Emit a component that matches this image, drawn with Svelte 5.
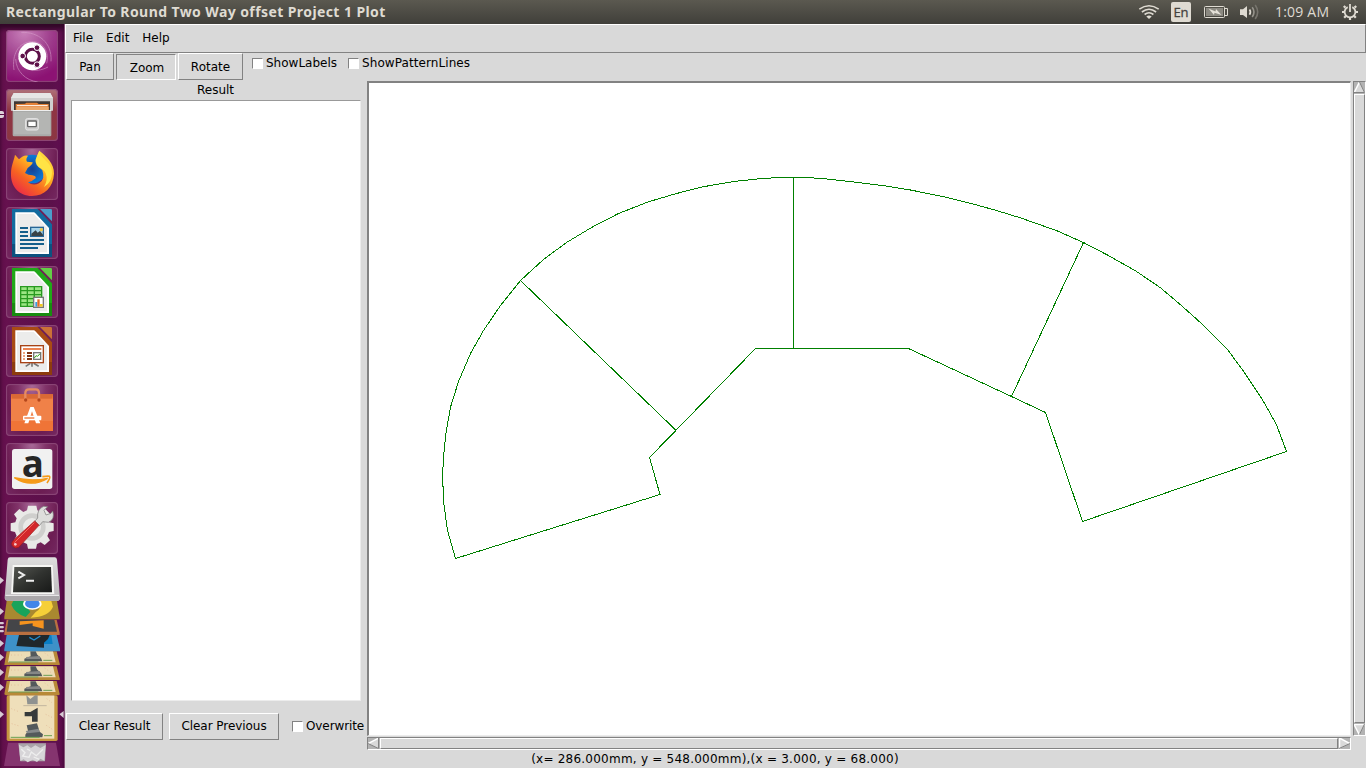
<script>
  const outline = '455.5,558.5 447.5,530.5 443.8,503.5 442.5,475.5 443.8,453.5 446.3,430.5 450.7,406.5 458.5,381.5 470.5,353.5 483.5,330.5 500.5,305.5 520.5,280.5 543.5,259.5 566.5,242.5 591.5,227.5 618.5,213.5 648.5,201.8 676.5,193.5 703.5,186.7 733.5,181.5 758.5,178.9 778.5,177.5 809.5,177.7 828.5,179.1 856.5,182.3 885.5,186 910.5,190 943.5,196.7 970.5,203.3 996.5,210.5 1020.5,217.9 1056.5,230.6 1083.5,242.5 1106.5,254.5 1135.5,270.8 1160.5,287.8 1181.5,305.6 1202.6,324.5 1227,348.8 1243.5,371.3 1261.9,398.7 1276.3,424.3 1286.5,451.5 1082.5,521.5 1045.5,412.5 1011.5,396.5 908.5,348.5 755.5,348.5 676,430.3 649.5,457.5 660,494.5';
  const spokes = [[793.5,177.5,793.5,348.5],[520.5,280.5,676,430.3],[1083.5,242.5,1011.5,396.5]];
</script>

{#snippet doc(y, color, dark, light)}
  <path d="M36 {y} H128 L156 {y+42} V{y+144} H36Z" fill={color}/>
  <path d="M36 {y+105} H156 V{y+144} H36Z" fill={dark} opacity=".55"/>
  <path d="M46 {y+10} H104 L147 {y+56} V{y+135} H46Z" fill="#fff"/>
  <path d="M51 {y+15} H101 L141 {y+57} V{y+130} H51Z" fill="#ececeb"/>
  <path d="M104 {y+10} L147 {y+56} L145 {y+42} L114 {y+9}Z" fill="#d4d4d4"/>
  <path d="M112 {y-1} H157 V{y+47}Z" fill="#702157"/>
  <path d="M104 {y} H112 L156 {y+47} V{y+56} L147 {y+56} L104 {y+10}Z" fill={color}/>
  <path d="M120 {y} H152 Q156 {y} 156 {y+4} V{y+37}Z" fill={light}/>
{/snippet}

<div class="desktop">
  <header class="panel">
    <span class="title">Rectangular To Round Two Way offset Project 1 Plot</span>
    <div class="tray">
      <svg width="24" height="24" viewBox="0 0 24 24" fill="none" stroke="#dfdbd2" stroke-width="1.6"><path d="M2.3 9.2Q12 2.2 21.7 9.2M4.9 12Q12 6.5 19.1 12M7.6 14.5Q12 11 16.4 14.5"/><path d="M9.3 16.5L12 19L14.7 16.5Q12 14.5 9.3 16.5Z" fill="#dfdbd2" stroke="none"/></svg>
      <span class="lang">En</span>
      <svg class="battery" width="26" height="24" viewBox="0 0 26 24"><rect x="1.5" y="6.5" width="20" height="11" rx="1" fill="none" stroke="#dfdbd2"/><rect x="3" y="8" width="17" height="8" fill="#8b8981"/><path d="M22 8.5H24.5V15.5H22" fill="none" stroke="#dfdbd2"/><path d="M5.5 8.5L12.5 11.5L13 9L18.5 15L11.5 12.7L11 15Z" fill="#e5e1d8"/></svg>
      <svg class="volume" width="22" height="24" viewBox="0 0 22 24" fill="none"><path d="M1 9.2H4L8 6V18L4 15H1Z" fill="#dfdbd2"/><path d="M10.5 9.4Q12.3 12 10.5 14.8" stroke="#dfdbd2" stroke-width="1.7"/><path d="M13.2 7.2Q16.8 12 13.2 17" stroke="#96938b" stroke-width="1.6"/><path d="M16.2 5Q21.2 12 16.2 19" stroke="#77746d" stroke-width="1.6"/></svg>
      <span class="clock">1:09 AM</span>
      <svg class="power" width="18" height="24" viewBox="0 0 18 24" fill="none" stroke="#dfdbd2"><path d="M6.7 7.1A5.4 5.4 0 1 0 11.3 7.1" stroke-width="1.8"/><path d="M9 4V12" stroke-width="1.8"/><path d="M4.4 7.6L2.8 6M13.6 7.6L15.2 6M3.6 12H1M14.4 12H17M4.8 16L3.2 17.7M13.2 16L14.8 17.7M9 17.5V20" stroke-width="2.2"/></svg>
    </div>
  </header>

  <div class="body">
    <nav class="launcher">
      <svg class="tile dash" viewBox="18 18 156 156">
        <g fill="none" stroke="#d9a0cd" stroke-width="3" opacity=".55"><path d="M42 138C35 92 55 55 94 53C129 51 149 84 140 118"/><path d="M64 25C115 24 157 55 153 112"/><path d="M47 105C49 143 77 169 113 174"/><path d="M55 102C65 136 105 150 144 129"/></g>
        <circle cx="97" cy="97" r="42" fill="#fff"/>
        <circle cx="97" cy="97" r="21" fill="none" stroke="#5e1149" stroke-width="9"/>
        <g stroke="#fff" stroke-width="3" fill="#5e1149"><circle cx="68" cy="96" r="8.5"/><circle cx="111" cy="71" r="8.5"/><circle cx="111" cy="122" r="8.5"/></g>
      </svg>
      <div class="slot"><i class="pips"></i>
        <svg class="tile files" viewBox="18 195 156 156">
          <path d="M41 207H151L159 222V260H33V222Z" fill="#cfcfce"/><path d="M41 207H151L159 222H33Z" fill="#e6e6e5"/><path d="M42 232H150V260H42Z" fill="#3f3733"/>
          <path d="M47 240L75 239L79 236H111L116 240H146V260H47Z" fill="#e48238"/><path d="M51 245H143" stroke="#fff" stroke-width="3"/><path d="M49 249H146V260H49Z" fill="#eba86a"/>
          <path d="M38 258H154V334Q154 337 150 337H42Q38 337 38 333Z" fill="#a9aaa8"/><path d="M38 258H154V261H38Z" fill="#eee"/><path d="M42 264H150V331H42Z" fill="#b4b5b3"/>
          <rect x="77" y="284" width="38" height="34" rx="5" fill="#ccc" stroke="#e8e8e8" stroke-width="3"/><rect x="83" y="291" width="26" height="17" rx="2" fill="#fff" stroke="#666" stroke-width="4"/>
        </svg>
      </div>
      <svg class="tile" viewBox="18 372 156 156">
        <defs><linearGradient id="fox" x1=".9" y1="0" x2=".15" y2="1"><stop stop-color="#ffe94a"/><stop offset=".4" stop-color="#ffaf22"/><stop offset=".67" stop-color="#f76322"/><stop offset="1" stop-color="#e9224d"/></linearGradient><radialGradient id="globe"><stop stop-color="#183f91"/><stop offset="1" stop-color="#087ddb"/></radialGradient></defs>
        <circle cx="96" cy="435" r="43" fill="url(#globe)"/>
        <path d="M118 380C137 395 163 418 162 449C160 490 133 515 96 516C56 516 32 486 33 450C33 424 42 410 45 392L57 406Q71 391 84 395Q76 405 81 413L98 415Q98 422 83 432L75 447Q85 454 97 454Q109 456 107 463L94 472L84 475Q99 487 117 478Q137 466 127 439Q113 426 110 417Q107 402 118 380Z" fill="url(#fox)"/>
        <path d="M118 380C121 405 157 414 156 446Q156 475 132 489Q145 468 137 448Q132 437 116 430Q101 415 110 398Z" fill="#ffe345"/>
      </svg>
      <svg class="tile" viewBox="18 21 156 156">{@render doc(27,'#126b9f','#073c65','#4c9ecb')}
        <g stroke="#155f8b" stroke-width="6"><path d="M60 84H84M60 96H84M60 108H84M60 120H132M60 132H132M60 144H114"/></g><rect x="92" y="82" width="38" height="27" fill="#a9d4e9" stroke="#286695" stroke-width="4"/><path d="M94 108V101L107 91L113 98L120 93L129 104V108Z" fill="#394347"/><circle cx="124" cy="89" r="5" fill="#edc948"/>
      </svg>
      <svg class="tile" viewBox="18 198 156 156">{@render doc(204,'#20a818','#12740b','#63ce47')}
        <rect x="62" y="260" width="63" height="59" fill="#9be583"/><path d="M62 272H125M62 284H125M62 296H125M62 308H125M62 260H125V319H62ZM82 260V319M103 260V319" fill="none" stroke="#289a20" stroke-width="4"/><rect x="101" y="292" width="29" height="30" fill="#fff" stroke="#777" stroke-width="4"/><path d="M106 306H112V320H106Z" fill="#3a9bdd"/><path d="M112 298H119V320H112Z" fill="#e66a22"/><path d="M120 312H128V320H120Z" fill="#f1c921"/>
      </svg>
      <svg class="tile" viewBox="18 375 156 156">{@render doc(381,'#a94b14','#76310a','#cb7137')}
        <path d="M96 488V500M91 490L77 499M101 490L116 499" stroke="#777" stroke-width="5"/><rect x="62" y="437" width="68" height="51" fill="#fff" stroke="#a74316" stroke-width="4"/><path d="M69 447H124" stroke="#e6692e" stroke-width="5"/><path d="M69 459H75M69 468H75M69 477H75" stroke="#e78755" stroke-width="5"/><path d="M81 459H96M81 468H96M81 477H96" stroke="#803413" stroke-width="6"/><rect x="101" y="458" width="21" height="20" fill="#fff" stroke="#777" stroke-width="4"/><path d="M103 474L108 467L113 469L120 461" fill="none" stroke="#39a31d" stroke-width="3"/>
      </svg>
      <svg class="tile" viewBox="18 24 156 156">
        <path d="M33 55H159V165H33Z" fill="#ef7437"/><path d="M33 55H159L155 68H37Z" fill="#d96935"/><path d="M33 68H159V135H33Z" fill="#f08148"/><path d="M76 71V52Q76 40 87 40H107Q117 40 117 52V71" fill="none" stroke="#e68b61" stroke-width="7"/><circle cx="77" cy="72" r="5" fill="#b4471c"/><circle cx="117" cy="72" r="5" fill="#b4471c"/>
        <path d="M73 142L91 93H101L121 142H108L96 106L85 142Z" fill="#fff"/><rect x="69" y="119" width="55" height="14" rx="3" fill="#fff"/><path d="M73 126H103" stroke="#ef7437" stroke-width="4"/>
      </svg>
      <svg class="tile" viewBox="18 201 156 156"><rect x="36" y="219" width="121" height="120" rx="8" fill="#f1f1f1"/><text x="65" y="303" font-family="Open Sans, sans-serif" font-size="110" font-weight="700" fill="#262626">a</text><path d="M43 305Q91 337 143 307Q94 317 43 305Z" fill="#f59a18" stroke="#f59a18" stroke-width="4"/><path d="M127 302Q149 299 149 302Q151 307 141 321" fill="none" stroke="#f59a18" stroke-width="5"/></svg>
      <svg class="tile" viewBox="18 378 156 156">
        <path d="M84 389H109L112 403L123 408L136 399L151 415L143 428L147 439L161 442V465L147 468L142 480L150 493L134 507L122 499L111 504L108 518H84L81 504L70 499L58 507L42 492L50 480L45 468L32 465V442L46 439L50 427L42 415L58 399L70 408L81 403Z" fill="#e9e9e7"/><circle cx="96" cy="453" r="34" fill="none" stroke="#cfcfcd" stroke-width="14"/><circle cx="96" cy="453" r="25" fill="#eaeae8"/>
        <path d="M105 435L113 426Q110 400 131 391L143 392L132 403L138 417L153 412L158 405Q166 430 145 439L128 437L118 449Z" fill="#dededc" stroke="#777" stroke-width="2"/><path d="M104 435L117 448L56 514Q45 520 37 510Q32 502 39 494Z" fill="#d3272b" stroke="#9c1717" stroke-width="2"/><path d="M103 440L43 500" stroke="#ef6a62" stroke-width="3"/><circle cx="46" cy="505" r="4" fill="#f6caca"/>
      </svg>
      <svg class="stack" width="65" height="211" viewBox="0 15 195 633">
        <defs><linearGradient id="steel" x2="0" y2="1"><stop stop-color="#dedede"/><stop offset="1" stop-color="#bab6b9"/></linearGradient><linearGradient id="screen" x2="1" y2="1"><stop stop-color="#545651"/><stop offset=".5" stop-color="#30322f"/><stop offset="1" stop-color="#181918"/></linearGradient></defs>
        <path d="M24 572H168L180 642H12Z" fill="#85346f"/><path d="M55 574H138L135 628H61Z" fill="#aaa4aa"/><path d="M57 578L70 586L82 580L93 588L106 580L121 588L137 579L133 626L121 620L111 630L98 623L83 631L71 622L61 627Z" fill="#d7d5d8"/><path d="M64 592L75 602L68 612L87 616L94 600L109 611L129 592M81 591L91 596M101 615L118 622" fill="none" stroke="#eee" stroke-width="4"/>
        <rect x="20" y="430" width="153" height="137" rx="5" fill="#c69740"/><rect x="29" y="430" width="134" height="130" fill="#efdfba"/>
        <path d="M79 430L91 441L105 430H113V457H82Z" fill="#8f9290"/><path d="M70 461H140" stroke="#c2b69f" stroke-width="3"/><path d="M74 480H91L113 467V509H96V493H74Z" fill="#363a3a"/><path d="M80 520L111 514L119 539L129 547L127 556H76V548L84 536Z" fill="#53595b"/><path d="M77 537L116 530L119 540L82 544Z" fill="#85898b"/><path d="M32 556H119M132 551H156" stroke="#69a052" stroke-width="3"/>
        <path d="M140 440L156 452M137 487L156 496M139 520L157 532M34 470L54 478M35 515L61 523" stroke="#dfb18e" stroke-width="2" stroke-dasharray="3 6"/>
        <g fill="#b88937"><path d="M20 387H170L179 426Q179 430 174 430H18L13 427Z"/><path d="M20 343H170L179 380V384H13Z"/><path d="M20 298H170L179 335V339H13Z"/></g>
        <g fill="#ecdcb5"><path d="M30 387H159L167 420H24Z"/><path d="M30 343H159L167 376H24Z"/><path d="M30 298H159L167 331H24Z"/></g>
        {#each [298,343,388] as y}<path d="M91 {y}H107L112 {y+10}L123 {y+20}L127 {y+30}H73V{y+22}L92 {y+15}Z" fill="#53595b"/><path d="M78 {y+17}L119 {y+14}L121 {y+23}H79Z" fill="#858786"/><path d="M26 {y+32}H115M130 {y+27}H157" stroke="#6a9e55" stroke-width="3"/><path d="M134 {y+5}L158 {y+22}M33 {y+11}H65" stroke="#dfb18e" stroke-width="2" stroke-dasharray="3 7"/>{/each}
        <path d="M20 249H170L180 291V298H13V292Z" fill="#3e91c8"/><path d="M122 249H154L158 276H99L106 265H125Z" fill="#087ec4"/><path d="M57 249H149L144 261L132 272V287L49 282Z" fill="#20282c"/><path d="M88 256L102 264L121 252" fill="none" stroke="#238dce" stroke-width="4"/>
        <path d="M20 203H170L179 242V249H13V243Z" fill="#ba7040"/><path d="M25 203H163L171 239H20Z" fill="#444548"/><path d="M59 208L131 205V230L98 222V214L59 219Z" fill="#f5931e"/>
        <path d="M20 147H171L179 196V202H13V195Z" fill="#a98930"/><path d="M40 147H70L91 180L77 195Q44 183 34 158Z" fill="#18a45b"/><path d="M120 147H154L159 164Q147 194 92 197L107 180Q128 169 120 147Z" fill="#f6cf38"/><ellipse cx="97" cy="156" rx="28" ry="17" fill="#fff"/><ellipse cx="97" cy="155" rx="22" ry="14" fill="#4385e9"/>
        <path d="M30 16H164Q170 16 171 23L180 137Q180 147 170 147H25Q13 147 14 136L23 23Q24 16 30 16Z" fill="url(#steel)"/><path d="M15 132H179V138Q179 146 170 146H24Q15 146 15 138Z" fill="#aaa7aa"/><path d="M17 130H177" stroke="#f0eef0" stroke-width="3"/><path d="M38 39H158L163 126H33Z" fill="#f6f6f4"/><path d="M43 45H153L156 121H39Z" fill="url(#screen)"/><path d="M55 59L72 69L55 79M78 86H102" fill="none" stroke="#eee" stroke-width="6"/>
        <g fill="#d6cad3"><path d="M0 75L12 85L0 96ZM0 168L12 178L0 189ZM0 264L12 274L0 285ZM0 306L12 316L0 327ZM0 351L12 361L0 372ZM0 396L12 406L0 417ZM0 477L12 487L0 498ZM191 477L178 487L191 498Z"/><path d="M0 210H9L13 213L9 217H0ZM0 222H9L13 225L9 229H0ZM0 234H9L13 237L9 241H0Z"/></g>
      </svg>
    </nav>

    <main class="app">
      <div class="menubar"><span>File</span><span>Edit</span><span>Help</span></div>
      <div class="work">
        <section class="side">
          <div class="tools"><button class="pan">Pan</button><button class="zoom">Zoom</button><button class="rotate">Rotate</button></div>
          <div class="caption">Result</div>
          <div class="result"></div>
          <div class="actions"><button class="clear">Clear Result</button><button class="previous">Clear Previous</button><label class="check"><i></i><span class="over">Overwrite</span></label></div>
        </section>
        <section class="plot">
          <div class="options"><label class="check"><i></i><span>ShowLabels</span></label><label class="check"><i></i><span class="pattern">ShowPatternLines</span></label></div>
          <div class="view">
            <div class="canvas">
              <svg width="981" height="652" viewBox="369 83 981 652" fill="none" stroke="#008000" stroke-width="1" shape-rendering="crispEdges">
                <polygon points={outline}/>
                {#each spokes as [x1,y1,x2,y2]}<line {x1} {y1} {x2} {y2}/>{/each}
              </svg>
            </div>
            <div class="scroll vertical">
              <svg width="11" height="11" viewBox="0 0 11 11"><path d="M5.5 0L11 11H0Z" fill="#d9d9d9"/><path d="M5.5 0L0 11" stroke="#fff" stroke-width="1.5"/><path d="M5.5 0L10.5 10.5H0" fill="none" stroke="#828282"/></svg>
              <div class="thumb"></div>
              <svg width="11" height="11" viewBox="0 0 11 11"><path d="M0 0H11L5.5 11Z" fill="#d9d9d9"/><path d="M11 .5H0L5.5 11" fill="none" stroke="#fff" stroke-width="1.5"/><path d="M5.5 10.5L10.5 0" stroke="#828282"/></svg>
            </div>
            <div class="scroll horizontal">
              <svg width="11" height="11" viewBox="0 0 11 11"><path d="M0 5.5L11 0V11Z" fill="#d9d9d9"/><path d="M0 5.5L11 0" stroke="#fff" stroke-width="1.5"/><path d="M0 5.5L10.5 10.5V0" fill="none" stroke="#828282"/></svg>
              <div class="thumb"></div>
              <svg width="11" height="11" viewBox="0 0 11 11"><path d="M0 0L11 5.5L0 11Z" fill="#d9d9d9"/><path d="M.5 11V0L11 5.5" fill="none" stroke="#fff" stroke-width="1.5"/><path d="M11 5.5L0 10.5" stroke="#828282"/></svg>
            </div>
          </div>
          <div class="status">(x= 286.000mm, y = 548.000mm),(x = 3.000, y = 68.000)</div>
        </section>
      </div>
    </main>
  </div>
</div>

<style>
  :global(body){margin:0;overflow:hidden;background:#d9d9d9}
  *{box-sizing:border-box}
  .desktop{width:1366px;height:768px;display:flex;flex-direction:column;font:12px/14px "DejaVu Sans",sans-serif;color:#000}
  .panel{height:24px;flex:none;display:flex;justify-content:space-between;background:linear-gradient(#5b5950,#403f3a);color:#dfdbd2;font-family:"Noto Sans","Open Sans",sans-serif}
  .title{padding-left:6px;font-size:14px;line-height:24px;font-weight:700;white-space:nowrap;letter-spacing:.41px}
  .tray{display:flex;align-items:center;padding-right:7px}
  .tray svg{flex:none}
  .lang{width:20px;height:20px;margin-left:10px;border-radius:2px;background:#dfdbd2;color:#45433e;font:13px/21px "Open Sans",sans-serif;-webkit-text-stroke:.3px #45433e;text-align:center}
  .battery{margin-left:12px}.volume{margin-left:10px}
  .clock{margin-left:14px;width:54px;font:14px/24px "Open Sans",sans-serif;white-space:nowrap;letter-spacing:.2px}
  .power{margin-left:12px}
  .body{display:flex;height:744px}
  .launcher{width:65px;height:744px;flex:none;display:flex;flex-direction:column;align-items:center;gap:7px;padding:6px 1px 0 0;background:linear-gradient(90deg,#67114f,#5b104a 80%,#620e52);border-right:1px solid #855377;box-shadow:inset 0 5px 5px #310727;overflow:hidden}
  .tile{display:block;width:52px;height:52px;flex:none;overflow:visible;border-radius:4px;background:radial-gradient(ellipse at 50% 0,#a96b99 0,#813369 38%,#6c1d53 70%,#752962);box-shadow:inset 0 0 1px 1px #8c4878}
  .dash{background:radial-gradient(circle at 35% 5%,#c880b9,#9f3f8d 45%,#8c1374 80%);overflow:hidden}
  .files{background:linear-gradient(#b0737a,#8f3544 40%,#8b3742)}
  .slot{display:flex;width:64px;height:52px;align-items:center;flex:none}
  .pips{width:4px;height:7px;margin-right:2px;margin-bottom:2px;border-top:3px solid #ddd2da;border-bottom:3px solid #ddd2da;border-radius:0 2px 2px 0}
  .stack{display:block;flex:none;margin-top:-4px;margin-left:1px}
  .app{width:1301px;display:flex;flex-direction:column;background:#d9d9d9}
  .menubar{height:29px;display:flex;gap:13px;padding:6px 7px;border:1px solid #828282;border-top-color:#fff;border-left-color:#fff}
  .work{display:flex;height:715px}
  .side{width:302px;display:flex;flex-direction:column;flex:none}
  .tools{display:flex;gap:2px;height:28px;padding-left:1px}
  button{height:27px;padding:0;border:1px solid #828282;border-top-color:#fff;border-left-color:#fff;background:#d9d9d9;font:inherit;color:#000;white-space:nowrap}
  .pan{width:48px}.zoom{width:60px;height:26px;margin-top:1px;border-color:#828282 #fff #fff #828282;background:#d9d9d9;padding:1px 0 0 2px}.rotate{width:65px}
  .caption{height:19px;text-align:center;line-height:19px;padding-right:1px}
  .result{width:290px;height:601px;margin-left:6px;background:#fff;border:1px solid #999;border-right-color:#ececec;border-bottom-color:#ececec}
  .actions{height:39px;margin-top:12px;display:flex;padding-left:1px}
  .actions button{padding-bottom:2px}
  .clear{width:97px;letter-spacing:-.05px}.previous{width:110px;margin-left:6px;letter-spacing:-.05px}
  .check{display:flex;align-items:flex-start;gap:3px}
  .over{letter-spacing:-.1px}.pattern{letter-spacing:.08px}
  .check i{width:11px;height:11px;margin-top:2px;flex:none;background:#fff;border:1px solid #828282;border-right-color:#fff;border-bottom-color:#fff}
  .actions .check{margin-left:13px;padding-top:6px}
  .plot{width:999px;display:flex;flex-direction:column}
  .options{height:28px;display:flex;gap:11px;padding-top:3px;margin-left:-115px}
  .view{display:grid;grid-template-columns:984px 2px 13px;grid-template-rows:655px 1px 13px;height:669px}
  .canvas{grid-area:1/1;border:2px solid #828282;border-right:1px solid #ececec;border-bottom:1px solid #ececec;background:#fff;overflow:hidden}
  .canvas svg{display:block}
  .scroll{background:#b3b3b3;border:1px solid #828282;border-right-color:#fff;border-bottom-color:#fff;display:flex;gap:1px}
  .vertical{grid-area:1/3;flex-direction:column}.horizontal{grid-area:3/1}
  .scroll svg{display:block;flex:none}
  .thumb{flex:1;background:#d9d9d9;border:1px solid #828282;border-top-color:#fff;border-left-color:#fff}
  .status{height:18px;text-align:center;line-height:18px;padding-right:303px;white-space:nowrap;letter-spacing:.23px}
</style>
